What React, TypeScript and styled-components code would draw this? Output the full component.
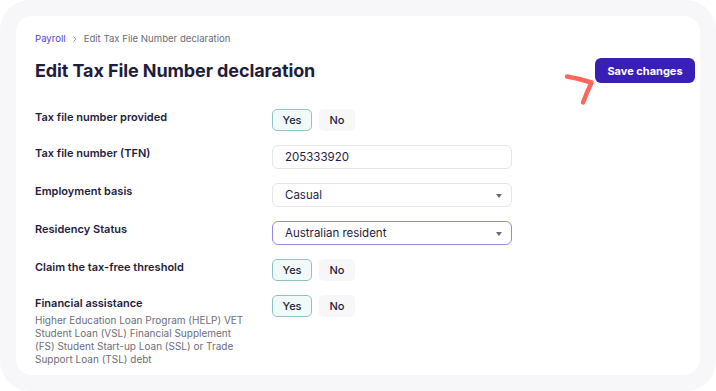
import { createGlobalStyle } from "styled-components";
import styled from "styled-components";

const GlobalStyle = createGlobalStyle`
  body {
    margin: 0;
    background: #ffffff;
    font-family: Inter, "Noto Sans", sans-serif;
    color: #1f1d3d;
  }
  * { box-sizing: border-box; }
`;

const Frame = styled.div`
  width: 716px;
  height: 391px;
  background: #f7f7fa;
  border-radius: 30px;
  padding: 16px;
`;

const Card = styled.div`
  height: 359px;
  width: 684px;
  background: #ffffff;
  border-radius: 16px;
  padding: 16px 5px 0 19px;
  overflow: hidden;
`;

const Breadcrumb = styled.nav`
  display: flex;
  align-items: center;
  gap: 5px;
  font-size: 9.6px;
  line-height: 14px;
  color: #6b6b76;
`;

const Crumb = styled.span<{ $link?: boolean }>`
  color: ${(p) => (p.$link ? "#5a3ed6" : "#6b6b76")};
`;

const Header = styled.div`
  display: flex;
  justify-content: space-between;
  align-items: center;
  margin-top: 12px;
`;

const Title = styled.h1`
  margin: 0;
  font-size: 18px;
  line-height: 25px;
  font-weight: 700;
  color: #1f1d3d;
  letter-spacing: -0.1px;
`;

const ButtonWrap = styled.div`
  position: relative;
`;

const SaveButton = styled.button`
  height: 25px;
  width: 100px;
  border: none;
  border-radius: 6px;
  background: #3a1fb6;
  color: #ffffff;
  font-family: inherit;
  font-size: 11px;
  font-weight: 700;
  cursor: pointer;
`;

const Scribble = styled.svg`
  position: absolute;
  left: -32px;
  top: 14px;
`;

const Form = styled.div`
  display: flex;
  flex-direction: column;
  gap: 14px;
  margin-top: 26px;
`;

const Row = styled.div`
  display: grid;
  grid-template-columns: 237px 240px;
  align-items: start;
`;

const LabelCol = styled.div`
  display: flex;
  flex-direction: column;
`;

const Label = styled.label`
  font-size: 11px;
  line-height: 16px;
  font-weight: 600;
  color: #1f1d3d;
`;

const Hint = styled.p`
  margin: 3px 0 0;
  width: 212px;
  font-size: 10px;
  line-height: 13px;
  color: #6e6e78;
`;

const Toggle = styled.div`
  display: flex;
  gap: 7px;
`;

const ToggleButton = styled.button<{ $active?: boolean; $w: number }>`
  height: 22px;
  width: ${(p) => p.$w}px;
  border-radius: 5px;
  border: 1.5px solid ${(p) => (p.$active ? "#8ec4c1" : "transparent")};
  background: ${(p) => (p.$active ? "#f0faf9" : "#f7f7fa")};
  color: #1f1d3d;
  font-family: inherit;
  font-size: 11px;
  font-weight: 500;
  padding: 0;
  cursor: pointer;
`;

const Field = styled.div<{ $focus?: boolean }>`
  position: relative;
  height: 24px;
  width: 240px;
  border: 1px solid ${(p) => (p.$focus ? "#9a86d8" : "#e6e6ea")};
  border-radius: 6px;
  display: flex;
  align-items: center;
  padding: 0 12px;
  font-size: 11.5px;
  color: #1f1d3d;
`;

const Caret = styled.span`
  position: absolute;
  right: 9px;
  top: 10px;
  width: 0;
  height: 0;
  border-left: 3.5px solid transparent;
  border-right: 3.5px solid transparent;
  border-top: 4px solid #6b6b76;
`;

function YesNo({ value }: { value: boolean }) {
  return (
    <Toggle>
      <ToggleButton $w={40} $active={value}>
        Yes
      </ToggleButton>
      <ToggleButton $w={36} $active={!value}>
        No
      </ToggleButton>
    </Toggle>
  );
}

export default function App() {
  return (
    <>
      <GlobalStyle />
      <Frame>
        <Card>
          <Breadcrumb>
            <Crumb $link>Payroll</Crumb>
            <svg width="8" height="8" viewBox="0 0 8 8">
              <path d="M2.5 1.5 L5 4 L2.5 6.5" fill="none" stroke="#9a9aa3" strokeWidth="1" />
            </svg>
            <Crumb>Edit Tax File Number declaration</Crumb>
          </Breadcrumb>
          <Header>
            <Title>Edit Tax File Number declaration</Title>
            <ButtonWrap>
              <Scribble width="34" height="34" viewBox="0 0 34 34">
                <path
                  d="M4 4.5 Q 16 6.5 28.5 10.5 Q 24 20 20 30.5"
                  fill="none"
                  stroke="#ff675a"
                  strokeWidth="4.5"
                  strokeLinecap="round"
                  strokeLinejoin="round"
                />
              </Scribble>
              <SaveButton>Save changes</SaveButton>
            </ButtonWrap>
          </Header>
          <Form>
            <Row>
              <Label>Tax file number provided</Label>
              <YesNo value />
            </Row>
            <Row>
              <Label>Tax file number (TFN)</Label>
              <Field>205333920</Field>
            </Row>
            <Row>
              <Label>Employment basis</Label>
              <Field>
                Casual
                <Caret />
              </Field>
            </Row>
            <Row>
              <Label>Residency Status</Label>
              <Field $focus>
                Australian resident
                <Caret />
              </Field>
            </Row>
            <Row>
              <Label>Claim the tax-free threshold</Label>
              <YesNo value />
            </Row>
            <Row>
              <LabelCol>
                <Label>Financial assistance</Label>
                <Hint>
                  Higher Education Loan Program (HELP) VET Student Loan (VSL)
                  Financial Supplement (FS) Student Start-up Loan (SSL) or
                  Trade Support Loan (TSL) debt
                </Hint>
              </LabelCol>
              <YesNo value />
            </Row>
          </Form>
        </Card>
      </Frame>
    </>
  );
}
